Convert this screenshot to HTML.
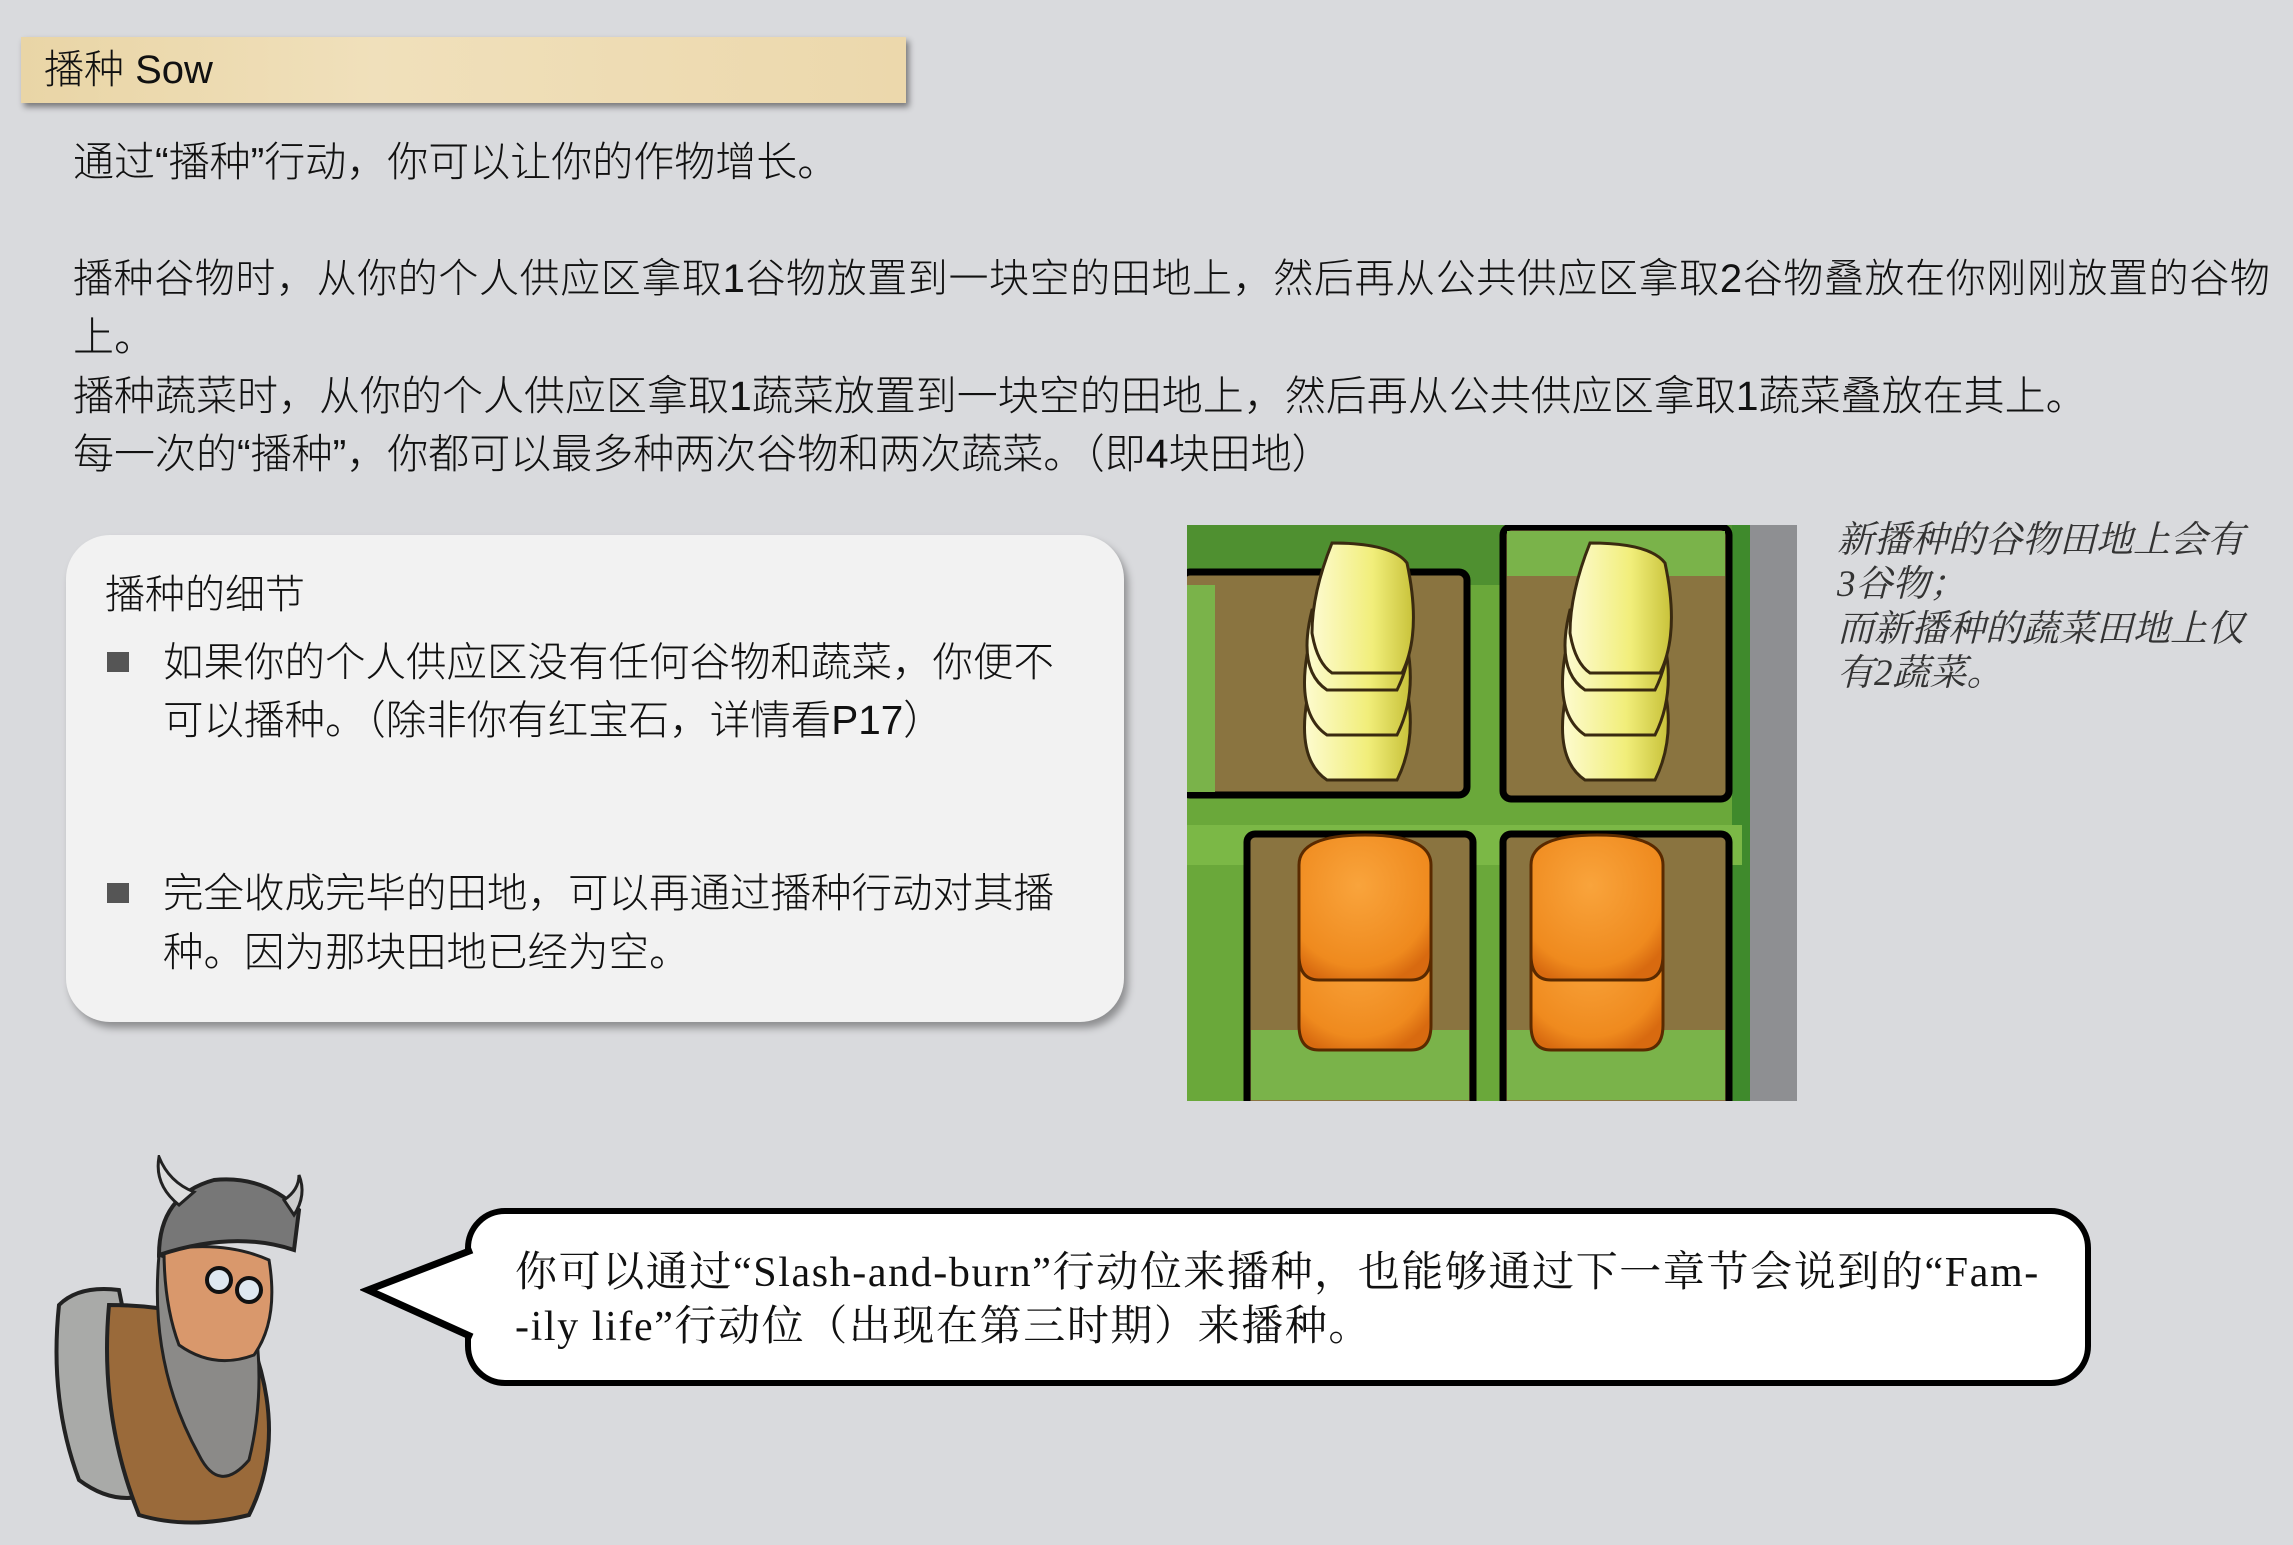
<!DOCTYPE html>
<html><head><meta charset="utf-8"><style>
html,body{margin:0;padding:0}
body{width:2293px;height:1545px;overflow:hidden;position:relative;background:#d9dadd;font-family:"Liberation Sans","Noto Sans CJK SC",sans-serif;color:#111}
.t{position:absolute;white-space:nowrap;font-size:41px;line-height:1;font-weight:300}
#hdr{position:absolute;left:21px;top:37px;width:885px;height:66px;background:linear-gradient(90deg,#e9d5a6,#f0e0bb 40%,#ecd8ac);box-shadow:3px 4px 6px rgba(0,0,0,.45)}
#box{position:absolute;left:66px;top:535px;width:1058px;height:487px;border-radius:44px;background:#f2f2f2;box-shadow:4px 6px 8px rgba(0,0,0,.35)}
.sq{position:absolute;width:22px;height:20px;background:#555}
.cap{position:absolute;left:1837px;font-family:"Liberation Serif","Noto Serif CJK SC",serif;font-style:italic;font-size:37px;color:#333;white-space:nowrap;line-height:1}
#bub{position:absolute;left:465px;top:1208px;width:1614px;height:166px;border:6px solid #000;border-radius:40px;background:#fff}
.bt{position:absolute;left:515px;font-family:"Liberation Serif","Noto Serif CJK SC",serif;font-size:42px;letter-spacing:1.6px;white-space:nowrap;line-height:1}
</style></head><body>
<div id="hdr"></div>
<div class="t" style="left:44px;top:50px;font-size:40px">播种 Sow</div>
<div class="t" style="left:73px;top:142px">通过“播种”行动，你可以让你的作物增长。</div>
<div class="t" style="left:73px;top:259px;font-size:40px;letter-spacing:0.6px">播种谷物时，从你的个人供应区拿取1谷物放置到一块空的田地上，然后再从公共供应区拿取2谷物叠放在你刚刚放置的谷物</div>
<div class="t" style="left:73px;top:317px">上。</div>
<div class="t" style="left:73px;top:376px">播种蔬菜时，从你的个人供应区拿取1蔬菜放置到一块空的田地上，然后再从公共供应区拿取1蔬菜叠放在其上。</div>
<div class="t" style="left:73px;top:434px">每一次的“播种”，你都可以最多种两次谷物和两次蔬菜。（即4块田地）</div>

<div id="box"></div>
<div class="t" style="left:105px;top:575px;font-size:40px">播种的细节</div>
<div class="sq" style="left:107px;top:652px"></div>
<div class="t" style="left:163px;top:642px;font-size:40.5px">如果你的个人供应区没有任何谷物和蔬菜，你便不</div>
<div class="t" style="left:163px;top:700px;font-size:40.5px">可以播种。（除非你有红宝石，详情看P17）</div>
<div class="sq" style="left:107px;top:883px"></div>
<div class="t" style="left:163px;top:873px;font-size:40.5px">完全收成完毕的田地，可以再通过播种行动对其播</div>
<div class="t" style="left:163px;top:932px;font-size:40.5px">种。因为那块田地已经为空。</div>

<svg style="position:absolute;left:1187px;top:525px" width="610" height="576" viewBox="0 0 610 576">
<defs>
<linearGradient id="y" x1="0" x2="1"><stop offset="0" stop-color="#fdfbd0"/><stop offset=".6" stop-color="#f1ee7a"/><stop offset="1" stop-color="#c8c23a"/></linearGradient>
<radialGradient id="o" cx=".45" cy=".35" r=".7"><stop offset="0" stop-color="#f9a43c"/><stop offset=".8" stop-color="#ef8a1e"/><stop offset="1" stop-color="#d86a10"/></radialGradient>
</defs>
<rect width="610" height="576" fill="#6aa83a"/>
<rect x="0" y="0" width="610" height="60" fill="#4f9030"/>
<rect x="560" y="0" width="50" height="576" fill="#8e8f92"/>
<rect x="545" y="0" width="18" height="576" fill="#3f8a2c"/>
<rect x="0" y="300" width="555" height="40" fill="#7bb846"/>
<g stroke="#000" stroke-width="7">
<rect x="-5" y="47" width="285" height="223" rx="8" fill="#8a7440"/>
<rect x="316" y="2" width="226" height="272" rx="8" fill="#8a7440"/>
<rect x="60" y="309" width="226" height="280" rx="8" fill="#8a7440"/>
<rect x="316" y="309" width="226" height="280" rx="8" fill="#8a7440"/>
</g>
<rect x="0" y="60" width="28" height="207" fill="#7ab34a"/>
<rect x="320" y="6" width="218" height="45" fill="#7ab34a"/>
<rect x="64" y="505" width="218" height="70" fill="#7ab34a"/>
<rect x="320" y="505" width="218" height="70" fill="#7ab34a"/>
<g stroke="#3a2a10" stroke-width="3" fill="url(#y)">
<path d="M120 175 q-10 60 20 80 h70 q20-40 10-90 z"/>
<path d="M120 130 q-10 60 20 80 h70 q20-40 10-90 z"/>
<path d="M125 85 q-15 60 15 80 h70 q20-40 10-90 z"/>
<path d="M145 18 q-20 50 -20 90 q5 30 20 40 h70 q20-40 5-110 q-15-20 -75-20 z"/>
<path d="M378 175 q-10 60 20 80 h70 q20-40 10-90 z"/>
<path d="M378 130 q-10 60 20 80 h70 q20-40 10-90 z"/>
<path d="M383 85 q-15 60 15 80 h70 q20-40 10-90 z"/>
<path d="M403 18 q-20 50 -20 90 q5 30 20 40 h70 q20-40 5-110 q-15-20 -75-20 z"/>
</g>
<g stroke="#5a2a00" stroke-width="3" fill="url(#o)">
<path d="M112 420 q0-40 66-40 q66 0 66 40 v80 q0 25 -20 25 h-92 q-20 0 -20-25 z"/>
<path d="M112 340 q0-30 66-30 q66 0 66 30 v90 q0 25 -20 25 h-92 q-20 0 -20-25 z"/>
<path d="M344 420 q0-40 66-40 q66 0 66 40 v80 q0 25 -20 25 h-92 q-20 0 -20-25 z"/>
<path d="M344 340 q0-30 66-30 q66 0 66 30 v90 q0 25 -20 25 h-92 q-20 0 -20-25 z"/>
</g>
</svg>

<div class="cap" style="top:522px">新播种的谷物田地上会有</div>
<div class="cap" style="top:566px">3谷物；</div>
<div class="cap" style="top:611px">而新播种的蔬菜田地上仅</div>
<div class="cap" style="top:655px">有2蔬菜。</div>

<div id="bub"></div>
<svg style="position:absolute;left:360px;top:1245px" width="115" height="100" viewBox="0 0 115 100">
<path d="M112 5 L8 45 L112 92" fill="#fff" stroke="#000" stroke-width="7" stroke-linejoin="miter"/>
<rect x="108" y="12" width="10" height="74" fill="#fff"/>
</svg>
<div class="bt" style="top:1252px">你可以通过“Slash-and-burn”行动位来播种，也能够通过下一章节会说到的“Fam-</div>
<div class="bt" style="top:1306px">-ily life”行动位（出现在第三时期）来播种。</div>

<svg style="position:absolute;left:44px;top:1155px" width="340" height="370" viewBox="0 0 330 370">
<path d="M10 150 q20-20 60-15 l40 200 q-40 20 -80 -10 q-30 -80 -20 -175 z" fill="#a9aaa8" stroke="#222" stroke-width="4"/>
<path d="M60 150 q80 0 140 30 q40 100 0 180 q-60 15 -110 0 q-40 -100 -30 -210 z" fill="#9a6a3a" stroke="#222" stroke-width="4"/>
<path d="M110 100 q-10 110 40 200 q20 40 50 5 q20 -80 0 -170 z" fill="#8b8a88" stroke="#222" stroke-width="3"/>
<path d="M115 95 q60 -10 105 10 q10 60 -15 95 q-40 15 -75 -10 q-15 -40 -15 -95 z" fill="#d9986c" stroke="#222" stroke-width="3"/>
<path d="M110 100 q0 -60 55 -75 q50 -5 85 30 l-5 40 q-60 -20 -135 5 z" fill="#777" stroke="#222" stroke-width="4"/>
<path d="M130 50 q-25 -20 -20 -48 q10 25 35 35 z" fill="#ddd" stroke="#222" stroke-width="3"/>
<path d="M235 45 q15 -10 15 -25 q8 20 -5 40 z" fill="#ccc" stroke="#222" stroke-width="3"/>
<circle cx="170" cy="125" r="12" fill="#dfe8f0" stroke="#111" stroke-width="4"/>
<circle cx="200" cy="135" r="12" fill="#dfe8f0" stroke="#111" stroke-width="4"/>
</svg>
</body></html>
